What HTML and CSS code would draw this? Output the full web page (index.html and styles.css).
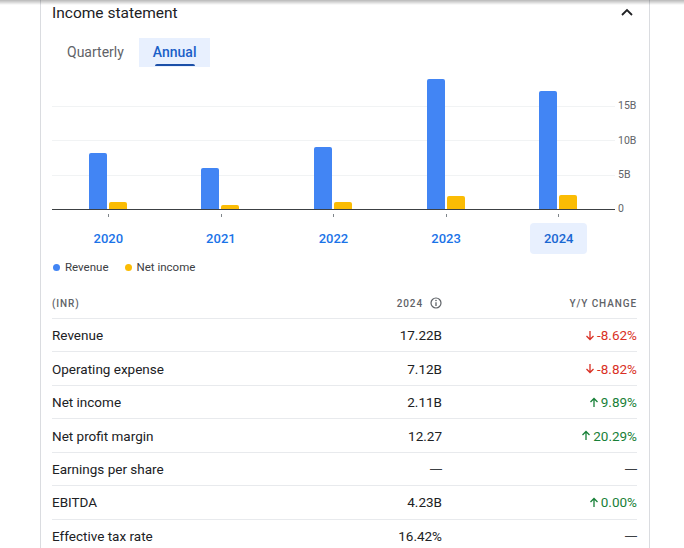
FILE: index.html
```html
<!DOCTYPE html>
<html>
<head>
<meta charset="utf-8">
<link rel="stylesheet" href="styles.css">
</head>
<body>
<div class="topshade"></div>
<div class="card">
  <div class="head">
    <span class="title">Income statement</span>
    <svg class="chev" width="12" height="8" viewBox="0 0 12 8"><path d="M1 7 L6 2 L11 7" fill="none" stroke="#202124" stroke-width="1.8"/></svg>
  </div>
  <div class="tabs">
    <div class="tab">Quarterly</div>
    <div class="tab active">Annual</div>
  </div>
  <div class="chart">
    <div class="plot">
      <div class="group"><div class="bar rev" style="height:56px"></div><div class="bar net" style="height:7px"></div></div>
      <div class="group"><div class="bar rev" style="height:41px"></div><div class="bar net" style="height:4px"></div></div>
      <div class="group"><div class="bar rev" style="height:62px"></div><div class="bar net" style="height:7px"></div></div>
      <div class="group"><div class="bar rev" style="height:130px"></div><div class="bar net" style="height:13px"></div></div>
      <div class="group"><div class="bar rev" style="height:118px"></div><div class="bar net" style="height:14.5px"></div></div>
    </div>
    <div class="axis">
      <div class="tickl">15B</div>
      <div class="tickl">10B</div>
      <div class="tickl">5B</div>
      <div class="tickl">0</div>
    </div>
  </div>
  <div class="years">
    <div class="ycell"><span class="year">2020</span></div>
    <div class="ycell"><span class="year">2021</span></div>
    <div class="ycell"><span class="year">2022</span></div>
    <div class="ycell"><span class="year">2023</span></div>
    <div class="ycell"><span class="year sel">2024</span></div>
  </div>
  <div class="legend">
    <span class="litem"><span class="dot blue"></span>Revenue</span>
    <span class="litem"><span class="dot yellow"></span>Net income</span>
  </div>
  <div class="table">
    <div class="row hdr">
      <div>(INR)</div>
      <div class="num">2024 <svg class="info" width="12" height="12" viewBox="0 0 12 12"><circle cx="6" cy="6" r="5" fill="none" stroke="#5f6368" stroke-width="1.2"/><path d="M6 5.2 V9" stroke="#5f6368" stroke-width="1.3"/><circle cx="6" cy="3.5" r="0.8" fill="#5f6368"/></svg></div>
      <div class="num">Y/Y change</div>
    </div>
    <div class="row">
      <div>Revenue</div><div class="num">17.22B</div>
      <div class="num down"><svg class="arr" width="10" height="11" viewBox="0 0 10 11"><path d="M5 1 V9.5 M1.5 6 L5 9.5 L8.5 6" fill="none" stroke="currentColor" stroke-width="1.3"/></svg>-8.62%</div>
    </div>
    <div class="row">
      <div>Operating expense</div><div class="num">7.12B</div>
      <div class="num down"><svg class="arr" width="10" height="11" viewBox="0 0 10 11"><path d="M5 1 V9.5 M1.5 6 L5 9.5 L8.5 6" fill="none" stroke="currentColor" stroke-width="1.3"/></svg>-8.82%</div>
    </div>
    <div class="row">
      <div>Net income</div><div class="num">2.11B</div>
      <div class="num up"><svg class="arr" width="10" height="11" viewBox="0 0 10 11"><path d="M5 10 V1.5 M1.5 5 L5 1.5 L8.5 5" fill="none" stroke="currentColor" stroke-width="1.3"/></svg>9.89%</div>
    </div>
    <div class="row">
      <div>Net profit margin</div><div class="num">12.27</div>
      <div class="num up"><svg class="arr" width="10" height="11" viewBox="0 0 10 11"><path d="M5 10 V1.5 M1.5 5 L5 1.5 L8.5 5" fill="none" stroke="currentColor" stroke-width="1.3"/></svg>20.29%</div>
    </div>
    <div class="row">
      <div>Earnings per share</div><div class="num dash">—</div>
      <div class="num dash">—</div>
    </div>
    <div class="row">
      <div>EBITDA</div><div class="num">4.23B</div>
      <div class="num up"><svg class="arr" width="10" height="11" viewBox="0 0 10 11"><path d="M5 10 V1.5 M1.5 5 L5 1.5 L8.5 5" fill="none" stroke="currentColor" stroke-width="1.3"/></svg>0.00%</div>
    </div>
    <div class="row">
      <div>Effective tax rate</div><div class="num">16.42%</div>
      <div class="num dash">—</div>
    </div>
  </div>
</div>
</body>
</html>
```
FILE: styles.css
```css
html, body {
  margin: 0;
  padding: 0;
  background: #fff;
  font-family: Roboto, "Noto Sans", Arial, sans-serif;
  color: #202124;
  overflow: hidden;
}
.topshade {
  position: fixed;
  top: 0;
  left: 0;
  right: 0;
  height: 5px;
  background: linear-gradient(rgba(0,0,0,0.28), rgba(0,0,0,0));
  z-index: 5;
}
.card {
  margin-left: 40px;
  width: 585px;
  padding: 0 12px 0 11px;
  border-left: 1px solid #dadce0;
  border-right: 1px solid #dadce0;
  height: 560px;
}
.head {
  height: 26px;
  display: flex;
  align-items: center;
  justify-content: space-between;
}
.title {
  font-size: 15.5px;
  color: #202124;
}
.chev {
  margin-right: 4px;
  margin-top: -2px;
}
.tabs {
  margin-top: 12px;
  display: flex;
  height: 29px;
}
.tab {
  position: relative;
  padding: 0 15px;
  line-height: 29px;
  font-size: 14px;
  font-weight: 400;
  color: #5f6368;
}
.tab.active {
  background: #e8f0fe;
  color: #1a5fc8;
  font-weight: 500;
  padding: 0 14px;
}
.tab.active::after {
  content: "";
  position: absolute;
  left: 16px;
  right: 15px;
  bottom: 1px;
  height: 2px;
  background: #1a4fa8;
  border-radius: 2px 2px 0 0;
}
.chart {
  margin-top: 8px;
  display: flex;
  height: 135px;
}
.plot {
  width: 563px;
  height: 134px;
  border-bottom: 1px solid #3c4043;
  display: flex;
  background:
    linear-gradient(#f1f3f4, #f1f3f4) 0 31px / 100% 1px no-repeat,
    linear-gradient(#f1f3f4, #f1f3f4) 0 65px / 100% 1px no-repeat,
    linear-gradient(#f1f3f4, #f1f3f4) 0 100px / 100% 1px no-repeat;
}
.group {
  position: relative;
  flex: 1;
  display: flex;
  justify-content: center;
  align-items: flex-end;
  gap: 2px;
  padding-right: 1px;
}
.group::after {
  content: "";
  position: absolute;
  left: 56px;
  bottom: -8px;
  width: 1px;
  height: 3px;
  background: #80868b;
}
.bar {
  width: 18px;
  border-radius: 2px 2px 0 0;
}
.rev { background: #4285f4; }
.net { background: #fbbc04; }
.axis {
  width: 19px;
  padding-left: 3px;
  padding-top: 13.8px;
  height: 121px;
  font-size: 10.5px;
  color: #5f6368;
}
.tickl {
  height: 34.33px;
  display: flex;
  align-items: center;
}
.years {
  margin-top: 13px;
  width: 563px;
  display: flex;
}
.ycell {
  flex: 1;
  display: flex;
  justify-content: center;
}
.year {
  display: block;
  height: 31px;
  line-height: 31px;
  padding: 0 14px;
  border-radius: 4px;
  font-size: 13px;
  font-weight: 500;
  color: #1a73e8;
}
.year.sel {
  background: #e8f0fe;
  color: #1967d2;
}
.legend {
  margin-top: 6px;
  height: 14px;
  display: flex;
  align-items: center;
  gap: 15px;
  font-size: 11.5px;
  font-weight: 400;
  color: #3c4043;
}
.litem {
  display: flex;
  align-items: center;
  gap: 5px;
}
.dot {
  width: 7px;
  height: 7px;
  border-radius: 50%;
  margin-left: 1px;
}
.dot.blue { background: #4285f4; }
.dot.yellow { background: #fbbc04; }
.table {
  margin-top: 14px;
}
.row {
  display: grid;
  grid-template-columns: 1fr 120px 195px;
  align-items: center;
  box-sizing: border-box;
  height: 33.45px;
  border-bottom: 1px solid #e8eaed;
  font-size: 13.5px;
  font-weight: 400;
  color: #202124;
}
.row.hdr {
  height: 31px;
  font-size: 10px;
  font-weight: 500;
  letter-spacing: 0.9px;
  text-transform: uppercase;
  color: #5f6368;
}
.num {
  display: flex;
  justify-content: flex-end;
  align-items: center;
}
.info {
  margin-left: 7px;
}
.down { color: #d93025; }
.up { color: #188038; }
.arr {
  margin-right: 2px;
}
.dash {
  font-family: "Liberation Sans", Arial, sans-serif;
  font-size: 12px;
  color: #3c4043;
}
```
